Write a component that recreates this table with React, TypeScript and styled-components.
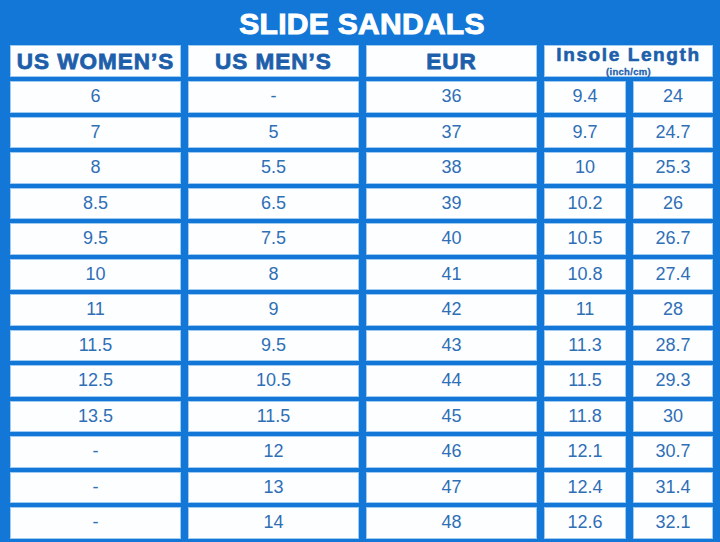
import React from 'react';
import styled, { createGlobalStyle } from 'styled-components';

const GlobalStyle = createGlobalStyle`
    html, body {
        margin: 0;
        padding: 0;
        background: #1277d6;
    }
    body {
        font-family: "Liberation Sans", Arial, sans-serif;
    }
`;

const Page = styled.div`
    width: 720px;
    height: 542px;
    background: #1277d6;
    box-sizing: border-box;
    padding: 0 8px 0 10px;
    overflow: hidden;
`;

const Title = styled.h1`
    margin: 0;
    height: 45px;
    line-height: 47px;
    text-align: center;
    color: #ffffff;
    font-size: 30px;
    font-weight: 700;
    letter-spacing: 0.3px;
    -webkit-text-stroke: 1px #ffffff;
    padding-left: 2px;
`;

const Grid = styled.div`
    display: grid;
    grid-template-columns: 171px 171px 171px 82px 80px;
    grid-template-rows: 32px repeat(13, 31.5px);
    column-gap: 7px;
    row-gap: 4px;
`;

const Cell = styled.div<{ span?: number }>`
    grid-column: span ${({ span }) => span || 1};
    background: #fdfeff;
    border: 1px solid #9fcaf2;
    box-sizing: border-box;
    display: flex;
    align-items: center;
    justify-content: center;
    color: #2f6fb6;
    font-size: 18px;
`;

const HeadCell = styled(Cell)`
    color: #1d5fab;
    font-size: 22.5px;
    font-weight: 700;
    letter-spacing: 1px;
    -webkit-text-stroke: 0.8px #1d5fab;
    padding-top: 1px;
`;

const InsoleHead = styled(HeadCell)`
    flex-direction: column;
    justify-content: flex-start;
    padding-top: 0;
    > .main {
        font-size: 19px;
        line-height: normal;
        margin-top: -2px;
        letter-spacing: 1.6px;
        -webkit-text-stroke: 0.6px #1d5fab;
    }
    > .sub {
        font-size: 9.5px;
        line-height: normal;
        letter-spacing: 0.3px;
        -webkit-text-stroke: 0.3px #1d5fab;
    }
`;

const rows: string[][] = [
    ['6', '-', '36', '9.4', '24'],
    ['7', '5', '37', '9.7', '24.7'],
    ['8', '5.5', '38', '10', '25.3'],
    ['8.5', '6.5', '39', '10.2', '26'],
    ['9.5', '7.5', '40', '10.5', '26.7'],
    ['10', '8', '41', '10.8', '27.4'],
    ['11', '9', '42', '11', '28'],
    ['11.5', '9.5', '43', '11.3', '28.7'],
    ['12.5', '10.5', '44', '11.5', '29.3'],
    ['13.5', '11.5', '45', '11.8', '30'],
    ['-', '12', '46', '12.1', '30.7'],
    ['-', '13', '47', '12.4', '31.4'],
    ['-', '14', '48', '12.6', '32.1'],
];

const App = () => {
    return (
        <Page>
            <GlobalStyle />
            <Title>SLIDE SANDALS</Title>
            <Grid>
                <HeadCell>US WOMEN’S</HeadCell>
                <HeadCell>US MEN’S</HeadCell>
                <HeadCell>EUR</HeadCell>
                <InsoleHead span={2}>
                    <span className={'main'}>Insole Length</span>
                    <span className={'sub'}>(inch/cm)</span>
                </InsoleHead>
                {rows.map((row, i) =>
                    row.map((value, j) => <Cell key={`${i}-${j}`}>{value}</Cell>)
                )}
            </Grid>
        </Page>
    );
};

export default App;
